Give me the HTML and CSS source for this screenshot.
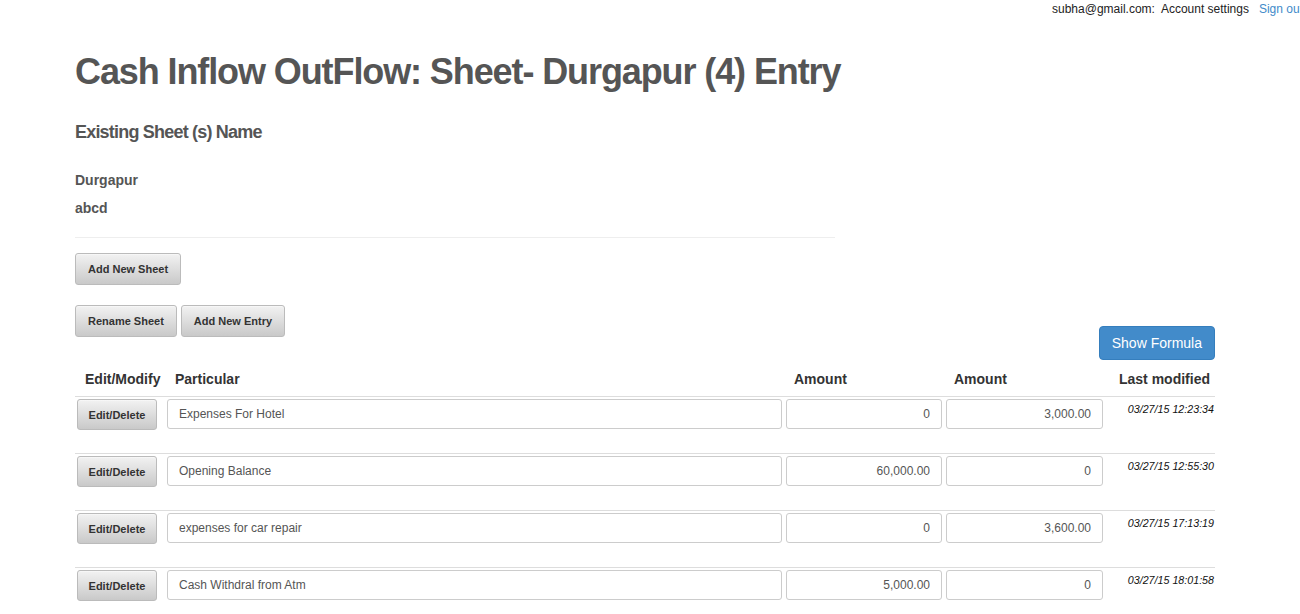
FILE: index.html
```html
<!DOCTYPE html>
<html lang="en">
<head>
    <meta charset="UTF-8">
    <title>Cash Inflow OutFlow</title>
    <link rel="stylesheet" href="styles.css">
</head>
<body>
    <div class="topbar">
        <span class="user">subha@gmail.com:</span>
        <a href="#" class="plain">Account settings</a>
        <a href="#" class="signout">Sign out</a>
    </div>

    <div class="container">
        <h1>Cash Inflow OutFlow: Sheet- Durgapur (4) Entry</h1>
        <h3>Existing Sheet (s) Name</h3>

        <ul class="sheets">
            <li>Durgapur</li>
            <li>abcd</li>
        </ul>
        <hr>

        <div class="actions">
            <button class="btn">Add New Sheet</button>
        </div>
        <div class="actions">
            <button class="btn">Rename Sheet</button>
            <button class="btn">Add New Entry</button>
        </div>

        <div class="formula-row">
            <button class="btn-primary">Show Formula</button>
        </div>

        <table class="entries">
            <colgroup>
                <col class="col-edit">
                <col class="col-part">
                <col class="col-amt">
                <col class="col-amt2">
                <col class="col-mod">
            </colgroup>
            <thead>
                <tr>
                    <th>Edit/Modify</th>
                    <th>Particular</th>
                    <th>Amount</th>
                    <th>Amount</th>
                    <th class="th-mod">Last modified</th>
                </tr>
            </thead>
            <tbody>
                <tr>
                    <td><button class="btn btn-row">Edit/Delete</button></td>
                    <td><input class="field" value="Expenses For Hotel"></td>
                    <td><input class="field num" value="0"></td>
                    <td><input class="field num" value="3,000.00"></td>
                    <td class="stamp">03/27/15 12:23:34</td>
                </tr>
                <tr>
                    <td><button class="btn btn-row">Edit/Delete</button></td>
                    <td><input class="field" value="Opening Balance"></td>
                    <td><input class="field num" value="60,000.00"></td>
                    <td><input class="field num" value="0"></td>
                    <td class="stamp">03/27/15 12:55:30</td>
                </tr>
                <tr>
                    <td><button class="btn btn-row">Edit/Delete</button></td>
                    <td><input class="field" value="expenses for car repair"></td>
                    <td><input class="field num" value="0"></td>
                    <td><input class="field num" value="3,600.00"></td>
                    <td class="stamp">03/27/15 17:13:19</td>
                </tr>
                <tr>
                    <td><button class="btn btn-row">Edit/Delete</button></td>
                    <td><input class="field" value="Cash Withdral from Atm"></td>
                    <td><input class="field num" value="5,000.00"></td>
                    <td><input class="field num" value="0"></td>
                    <td class="stamp">03/27/15 18:01:58</td>
                </tr>
            </tbody>
        </table>
    </div>
</body>
</html>
```

FILE: styles.css
```css
body {
    font-family: "Liberation Sans", Arial, sans-serif;
    margin: 0;
    padding: 0;
    background: #fff;
    color: #555;
    overflow-x: hidden;
}
.topbar {
    display: flex;
    justify-content: flex-end;
    gap: 10px;
    font-size: 12px;
    line-height: 14px;
    padding-top: 2px;
    margin-right: -3px;
    white-space: nowrap;
}
.topbar .user {
    margin-right: -4px;
}
.topbar .user,
.topbar .plain {
    color: #222;
    text-decoration: none;
}
.topbar .signout {
    color: #428bca;
    text-decoration: none;
}
.container {
    width: 1140px;
    margin-left: 75px;
}
h1 {
    font-size: 36px;
    font-weight: bold;
    margin: 36px 0 0;
    line-height: 40px;
    letter-spacing: -1.1px;
    color: #555;
}
h3 {
    font-size: 18px;
    margin: 30px 0 0;
    line-height: 20px;
    letter-spacing: -0.8px;
    color: #555;
}
.sheets {
    list-style: none;
    margin: 24px 0 0;
    padding: 0;
    font-size: 14px;
    font-weight: bold;
}
.sheets li {
    line-height: 28px;
}
hr {
    width: 760px;
    margin: 15px 0 15px;
    border: 0;
    border-top: 1px solid #eee;
}
.actions {
    display: flex;
    gap: 4px;
    margin-bottom: 20px;
}
.btn {
    font-family: "Liberation Sans", Arial, sans-serif;
    font-size: 11px;
    font-weight: bold;
    color: #333;
    height: 32px;
    padding: 0 12px;
    border: 1px solid #bbb;
    border-radius: 3px;
    background: linear-gradient(#f2f2f2, #c9c9c9);
    box-shadow: inset 0 1px 0 rgba(255,255,255,0.4);
    cursor: pointer;
}
.formula-row {
    display: flex;
    justify-content: flex-end;
    margin-top: -31px;
}
.btn-primary {
    font-family: "Liberation Sans", Arial, sans-serif;
    font-size: 14px;
    color: #fff;
    background: #428bca;
    border: 1px solid #357ebd;
    border-radius: 4px;
    height: 34px;
    padding: 0 12px;
}
.entries {
    width: 1140px;
    table-layout: fixed;
    border-collapse: collapse;
    margin-top: 2px;
}
.col-edit { width: 90px; }
.col-part { width: 619px; }
.col-amt { width: 160px; }
.col-amt2 { width: 161px; }
.col-mod { width: 110px; }
.entries th {
    font-size: 14px;
    font-weight: bold;
    color: #333;
    text-align: left;
    padding: 7px 10px;
    line-height: 20px;
    white-space: nowrap;
    border-bottom: 1px solid #ddd;
}
.entries th.th-mod {
    padding-left: 14px;
    padding-right: 0;
}
.entries td {
    vertical-align: top;
    padding: 2px 2px 23px;
    border-top: 1px solid #ddd;
}
.entries tbody tr:first-child td {
    border-top: 0;
}
.btn-row {
    width: 80px;
    height: 31px;
    padding: 0;
}
.field {
    box-sizing: border-box;
    width: 100%;
    height: 30px;
    padding: 0 11px;
    font-family: "Liberation Sans", Arial, sans-serif;
    font-size: 12px;
    color: #555;
    border: 1px solid #ccc;
    border-radius: 3px;
    background: #fff;
}
.num {
    text-align: right;
}
.entries td.stamp {
    font-size: 10.7px;
    font-style: italic;
    color: #111;
    text-align: right;
    padding-top: 6px;
    padding-right: 1px;
}
```
